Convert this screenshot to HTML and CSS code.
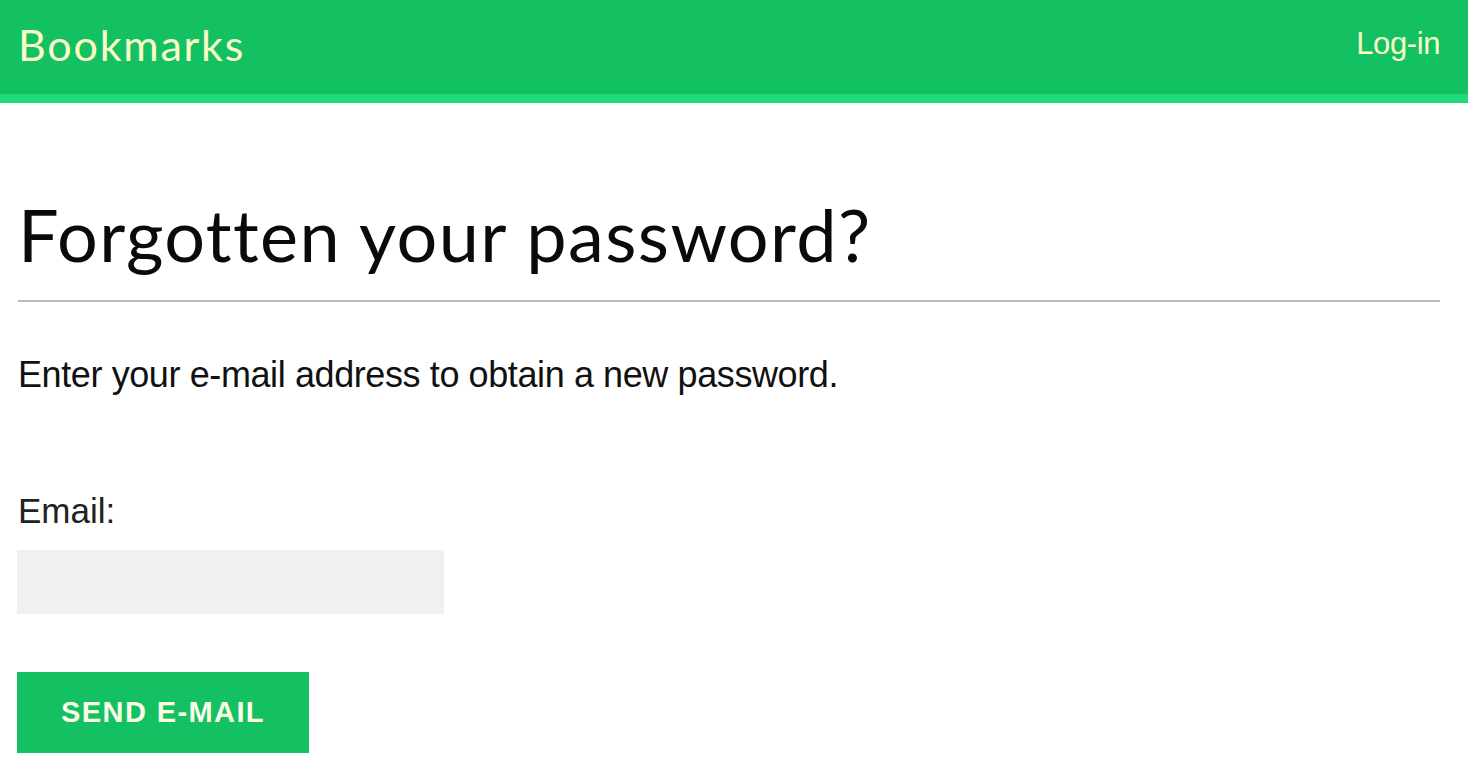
FILE: index.html
```html
<!DOCTYPE html>
<html lang="en">
<head>
<meta charset="utf-8">
<title>Forgotten your password?</title>
<link rel="stylesheet" href="styles.css">
</head>
<body>
<header class="topbar">
  <span class="logo">Bookmarks</span>
  <a class="login" href="#">Log-in</a>
</header>
<main class="content">
  <h1 class="title">Forgotten your password?</h1>
  <p class="intro">Enter your e-mail address to obtain a new password.</p>
  <form class="form">
    <label class="label" for="email">Email:</label>
    <input class="field" id="email" type="email">
    <button class="btn" type="button">SEND E-MAIL</button>
  </form>
</main>
</body>
</html>
```

FILE: styles.css
```css
* { box-sizing: border-box; }
html, body { margin: 0; padding: 0; background: #fff; }
body { font-family: "Liberation Sans", Arial, sans-serif; color: #111; }

.topbar {
  height: 103px;
  background: #13c163;
  border-bottom: 9px solid #1fdb78;
  display: flex;
  align-items: center;
  justify-content: space-between;
  padding: 0 28px 6px 18px;
}
.logo {
  font-family: "Lato", sans-serif;
  font-size: 43px;
  letter-spacing: 1.8px;
  color: #fafac8;
}
.login {
  font-family: "Liberation Sans", Arial, sans-serif;
  font-size: 31px;
  color: #fafac8;
  text-decoration: none;
  letter-spacing: -0.4px;
}

.content { padding: 0 28px 0 18px; }

.title {
  font-family: "Lato", sans-serif;
  font-weight: 400;
  font-size: 72px;
  letter-spacing: 1.4px;
  margin: 88px 0 0;
  padding-bottom: 23px;
  border-bottom: 2px solid #bdbdbd;
  line-height: 1.2;
  color: #0a0a0a;
}

.intro {
  font-size: 36px;
  margin: 52px 0 0;
  letter-spacing: -0.4px;
  color: #111;
}

.form { display: flex; flex-direction: column; align-items: flex-start; margin-top: 95px; }
.label { font-size: 35px; color: #222; }
.field {
  margin-top: 19px;
  margin-left: -1px;
  width: 427px;
  height: 64px;
  background: #f0f0f0;
  border: none;
  outline: none;
}
.btn {
  margin-top: 58px;
  margin-left: -1px;
  width: 292px;
  height: 81px;
  background: #13c163;
  color: #fbfbe8;
  border: none;
  font-family: "Liberation Sans", Arial, sans-serif;
  font-weight: 700;
  font-size: 29px;
  letter-spacing: 1.4px;
}
```
